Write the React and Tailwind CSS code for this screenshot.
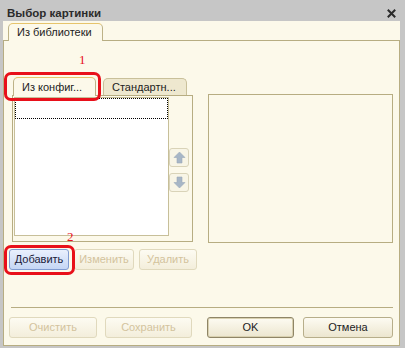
import React from "react";

const font = { fontFamily: '"Liberation Sans", Arial, sans-serif' };

function Btn({ children, className = "", disabled, primary, blue }) {
  let cls =
    "h-[21px] flex items-center justify-center whitespace-nowrap rounded-[3px] border text-[11px] ";
  if (blue) cls += "border-[#7f9bd1] bg-gradient-to-b from-[#e9f0fd] to-[#c5d6f4] text-[#1b1b3a] ";
  else if (primary) cls += "border-[#8f8566] bg-gradient-to-b from-[#fdfbf2] to-[#ece6cf] text-[#222] shadow-[inset_0_0_0_1px_#d9d1b0] ";
  else if (disabled) cls += "border-[#e0d9bd] bg-gradient-to-b from-[#fdfbf2] to-[#f3eedb] text-[#d3c39d] ";
  else cls += "border-[#b7ae8a] bg-gradient-to-b from-[#fdfbf2] to-[#ece6cf] text-[#222] ";
  return <div className={cls + className}>{children}</div>;
}

function Arrow({ down }) {
  return (
    <div className="w-[20px] h-[19px] rounded-[3px] border border-[#d9d3b8] bg-[#f8f5e6] flex items-center justify-center">
      <svg width="13" height="13" viewBox="0 0 13 13" className={down ? "rotate-180" : ""}>
        <path d="M6.5 1 L12 6.5 L9 6.5 L9 12 L4 12 L4 6.5 L1 6.5 Z" fill="#a7b6c6" stroke="#9aaabb" strokeWidth="0.6" />
      </svg>
    </div>
  );
}

export default function App() {
  return (
    <div style={font} className="w-[405px] h-[348px] bg-[#c6c6c6] flex flex-col overflow-hidden">
      {/* Title bar */}
      <div className="h-[21px] flex items-center justify-between pt-[6px] pl-[7px] pr-[9px]">
        <span className="text-[11.5px] leading-none font-bold text-[#2b2b2b] whitespace-nowrap">Выбор картинки</span>
        <svg width="9" height="9" viewBox="0 0 9 9">
          <path d="M0.8 0.8 L8.2 8.2 M8.2 0.8 L0.8 8.2" stroke="#2a2a2a" strokeWidth="2" />
        </svg>
      </div>
      {/* Body */}
      <div className="ml-[3px] mr-[5px] mb-[2px] flex-1 bg-[#fcf9ea] flex flex-col">
        {/* outer tab strip */}
        <div className="h-[19px] flex items-end pl-[5px]">
          <div className="h-[18px] w-[95px] -mb-px rounded-t-[5px] border border-b-0 border-[#bdb287] border-t-[#e6c46c] bg-[#fcf9ea] flex items-center pl-[8px] text-[11px] text-[#222] whitespace-nowrap relative z-10">
            Из библиотеки
          </div>
        </div>
        {/* outer panel */}
        <div className="flex-1 border border-[#b7ad82] flex flex-col pl-[8px] pr-[6px] pt-[36px] relative">
          {/* red annotation 1 */}
          <span className="absolute left-[75px] top-[12px] text-[13px] leading-none text-[#e8101a]" style={{ fontFamily: '"Liberation Serif", serif' }}>1</span>
          <div className="absolute left-0 top-[31px] w-[97px] h-[29px] border-[3px] border-[#e8101a] rounded-[7px] z-20" />
          {/* red annotation 2 */}
          <span className="absolute left-[63px] top-[189px] text-[13px] leading-none text-[#e8101a]" style={{ fontFamily: '"Liberation Serif", serif' }}>2</span>
          <div className="absolute left-0 top-[204px] w-[71px] h-[30px] border-[3px] border-[#e8101a] rounded-[7px] z-20" />

          <div className="flex gap-[15px]">
            {/* left column */}
            <div className="w-[182px] flex flex-col">
              <div className="h-[18px] flex items-end pl-[1px] gap-[7px]">
                <div className="h-[19px] w-[83px] -mb-px rounded-t-[5px] border border-b-0 border-[#bdb287] border-t-[#e6c46c] bg-[#fcf9ea] flex items-center pl-[8px] text-[11px] text-[#222] whitespace-nowrap relative z-10">
                  Из конфиг...
                </div>
                <div className="h-[17px] w-[84px] rounded-t-[5px] border border-b-0 border-[#c9c09a] bg-[#eee8cf] flex items-center pl-[8px] text-[11px] text-[#222] whitespace-nowrap">
                  Стандартн...
                </div>
              </div>
              <div className="h-[147px] border border-[#b7ad82] flex pl-[1px] pt-[1px] pb-[5px] pr-[3px]">
                <div className="w-[155px] h-full border border-[#c7bf99] bg-white">
                  <div className="h-[21px] border border-dotted border-black" />
                </div>
                <div className="flex-1 flex flex-col items-end justify-center gap-[6px] pt-[6px]">
                  <Arrow />
                  <Arrow down />
                </div>
              </div>
            </div>
            {/* right preview */}
            <div className="mt-[17px] w-[186px] h-[149px] border border-[#b7ad82]" />
          </div>

          {/* buttons row */}
          <div className="flex mt-[6px] ml-[-3px]">
            <Btn blue className="w-[60px]">Добавить</Btn>
            <Btn disabled className="w-[60px] ml-[5px]">Изменить</Btn>
            <Btn disabled className="w-[58px] ml-[5px]">Удалить</Btn>
          </div>

          {/* separator */}
          <div className="mt-[37px] h-px bg-[#b7ad82] ml-[-1px]" />

          {/* bottom buttons */}
          <div className="flex mt-[9px] ml-[-3px]">
            <Btn disabled className="w-[88px]">Очистить</Btn>
            <Btn disabled className="w-[87px] ml-[8px]">Сохранить</Btn>
            <Btn primary className="w-[87px] ml-[15px]">OK</Btn>
            <Btn className="w-[90px] ml-[9px]">Отмена</Btn>
          </div>
        </div>
      </div>
    </div>
  );
}
